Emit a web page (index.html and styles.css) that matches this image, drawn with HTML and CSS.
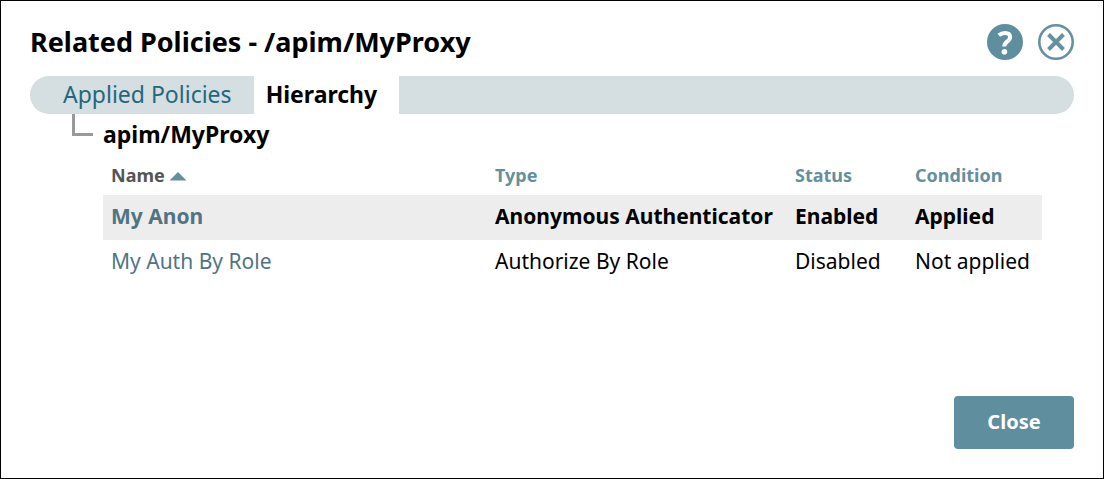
FILE: index.html
```html
<!DOCTYPE html>
<html lang="en">
<head>
<meta charset="utf-8">
<title>Related Policies</title>
<link rel="stylesheet" href="styles.css">
</head>
<body>
<main class="dialog">
  <header class="dialog-header">
    <h1 class="title">Related Policies - /apim/MyProxy</h1>
    <div class="header-actions">
      <button class="icon-button" type="button" aria-label="Help">
        <svg viewBox="0 0 36 36" aria-hidden="true">
          <circle cx="18" cy="18" r="18" fill="#5f8f9e"/>
          <path d="M11.8 11.2C13.6 9.7 15.7 9 18 9C21.2 9 23.1 10.5 23.1 13C23.1 15.2 22 16.3 20.3 17.5C18.3 18.9 17.3 19.8 17.3 22.6" fill="none" stroke="#fff" stroke-width="4"/>
          <circle cx="17.4" cy="27.8" r="2.8" fill="#fff"/>
        </svg>
      </button>
      <button class="icon-button" type="button" aria-label="Close dialog">
        <svg viewBox="0 0 36 36" aria-hidden="true">
          <circle cx="18" cy="18" r="16.7" fill="#fff" stroke="#6690a0" stroke-width="2.6"/>
          <path d="M10.5 10.5L25.5 25.5M25.5 10.5L10.5 25.5" fill="none" stroke="#6690a0" stroke-width="4"/>
        </svg>
      </button>
    </div>
  </header>
  <nav class="tabs">
    <a class="tab" href="#applied">Applied Policies</a>
    <a class="tab tab-active" href="#hierarchy" aria-current="page">Hierarchy</a>
  </nav>
  <section class="tree">
    <div class="tree-node">
      <span class="branch"></span>
      <h2 class="node-title">apim/MyProxy</h2>
    </div>
    <table class="policies">
      <colgroup><col class="col-name"><col class="col-type"><col class="col-status"><col class="col-condition"></colgroup>
      <thead>
        <tr>
          <th class="sorted" scope="col" aria-sort="ascending">Name<svg class="sort" viewBox="0 0 18 9" aria-hidden="true"><path d="M0.5 8.5L9 0L17.5 8.5Z" fill="#668f9c"/></svg></th>
          <th scope="col">Type</th><th scope="col">Status</th><th scope="col">Condition</th>
        </tr>
      </thead>
      <tbody>
        <tr class="current"><td><a class="policy" href="#my-anon">My Anon</a></td><td>Anonymous Authenticator</td><td>Enabled</td><td>Applied</td></tr>
        <tr><td><a class="policy" href="#my-auth">My Auth By Role</a></td><td>Authorize By Role</td><td>Disabled</td><td>Not applied</td></tr>
      </tbody>
    </table>
  </section>
  <footer class="dialog-footer"><button class="close-button" type="button">Close</button></footer>
</main>
</body>
</html>
```
FILE: styles.css
```css
* { box-sizing: border-box; }
body { margin: 0; background: #fff; color: #000; font-family: "Noto Sans", sans-serif; }
.dialog { display: flex; flex-direction: column; min-height: 100vh; padding: 23px 29px 29px; border: 1px solid #000; }
.dialog-header { display: flex; justify-content: space-between; align-items: center; height: 36px; margin-bottom: 16px; }
.title { margin: 0; font-size: 27px; line-height: 38px; }
.header-actions { display: flex; gap: 15px; }
.icon-button { width: 36px; height: 36px; padding: 0; border: 0; background: none; }
.icon-button svg { display: block; width: 36px; height: 36px; }
.tabs { display: flex; height: 38px; padding-left: 21px; border-radius: 19px; background: #d5dee1; font-size: 23px; line-height: 36px; }
.tab { padding: 0 22px 0 12px; color: #24677d; text-decoration: none; }
.tab-active { background: #fff; color: #000; font-weight: 700; }
.tree { flex: 1; padding: 0 32px 0 42px; }
.tree-node { display: flex; height: 40px; gap: 10px; }
.branch { width: 21px; height: 22px; border: solid #999; border-width: 0 0 3px 3px; }
.node-title { margin: 0; font-size: 23px; line-height: 40px; }
.policies { width: calc(100% - 31px); margin-left: 31px; border-collapse: collapse; table-layout: fixed; font-size: 21px; }
.col-name { width: 384px; }
.col-type { width: 300px; }
.col-status { width: 120px; }
.policies th { height: 41px; padding: 0 8px; color: #668f9c; font-size: 18px; line-height: 24px; text-align: left; }
.policies .sorted { color: #555; }
.sort { width: 18px; height: 9px; margin-left: 4px; vertical-align: 1px; }
.policies td { height: 45px; padding: 0 8px 4px; line-height: 28px; white-space: nowrap; }
.current { background: #ededed; font-weight: 700; }
.policy { color: #507482; text-decoration: none; }
.dialog-footer { display: flex; justify-content: flex-end; }
.close-button { min-width: 120px; height: 53px; padding: 0 24px 2px; border: 0; border-radius: 4px; background: #5f8f9e; color: #fff; font: 700 20px "Noto Sans", sans-serif; }
```
